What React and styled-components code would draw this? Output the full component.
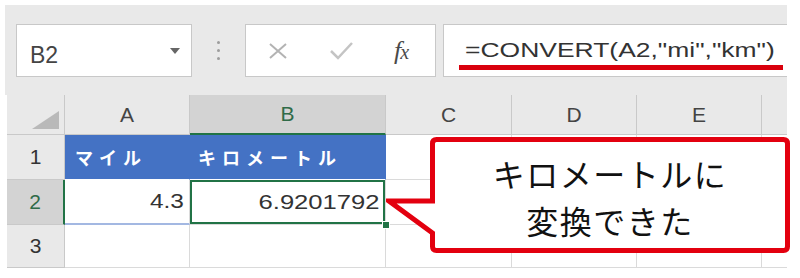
import styled, { createGlobalStyle } from "styled-components";

const GlobalStyle = createGlobalStyle`
  html, body {
    margin: 0;
    padding: 0;
    background: #ffffff;
  }
  body {
    font-family: "Liberation Sans", Arial, sans-serif;
  }
`;

const Page = styled.div`
  position: relative;
  width: 800px;
  height: 278px;
  overflow: hidden;
  background: #ffffff;
`;

const Sheet = styled.div`
  margin: 5px 13px 0 5px;
  width: 782px;
`;

const Toolbar = styled.div`
  display: flex;
  align-items: flex-start;
  height: 90px;
  padding: 19px 0 0 11px;
  box-sizing: border-box;
  background: #e9e9e9;
`;

const NameBox = styled.div`
  display: flex;
  align-items: center;
  justify-content: space-between;
  width: 176px;
  height: 53px;
  box-sizing: border-box;
  padding: 0 11px 0 13px;
  background: #ffffff;
  border: 1px solid #c8c8c8;
`;

const NameText = styled.span`
  padding-top: 10px;
  font-size: 23px;
  color: #444;
`;

const DotsSlot = styled.div`
  display: flex;
  flex-direction: column;
  align-items: center;
  justify-content: center;
  gap: 5px;
  width: 53px;
  height: 53px;
`;

const Dot = styled.span`
  width: 3px;
  height: 3px;
  border-radius: 50%;
  background: #9d9d9d;
`;

const ButtonBox = styled.div`
  display: flex;
  align-items: center;
  width: 191px;
  height: 53px;
  box-sizing: border-box;
  padding-left: 22px;
  background: #ffffff;
  border: 1px solid #c8c8c8;
`;

const IconSlot = styled.span`
  display: flex;
  align-items: center;
  justify-content: center;
  width: ${(p) => p.$w}px;
  margin-right: ${(p) => p.$gap}px;
`;

const Fx = styled.span`
  margin-left: 3px;
  font-family: "Liberation Serif", "Times New Roman", serif;
  font-style: italic;
  font-size: 26px;
  color: #4a4a4a;
  letter-spacing: -1px;

  small {
    font-size: 20px;
  }
`;

const FormulaBox = styled.div`
  flex: 1;
  height: 53px;
  box-sizing: border-box;
  margin-left: 7px;
  padding: 13px 0 0 15px;
  background: #ffffff;
  border: 1px solid #c8c8c8;
  border-right: none;
`;

const FormulaLine = styled.div`
  width: 318px;
  padding: 0 0 3px 6px;
  border-bottom: 5px solid #d9000d;
  font-size: 21px;
  line-height: 24px;
  color: #333;
  white-space: nowrap;
`;

const Stretch = styled.span`
  display: inline-block;
  transform: scaleX(${(p) => p.$sx});
  transform-origin: ${(p) => p.$origin};
`;

const Grid = styled.div`
  display: grid;
  grid-template-columns: 58px 125px 196px 126px 125px 125px 25px;
  grid-template-rows: 40px 45px 45px 43px;
  margin-left: 2px;
  width: 780px;
`;

const Cell = styled.div`
  position: relative;
  display: flex;
  align-items: center;
  box-sizing: border-box;
  background: #ffffff;
  border-right: ${(p) => (p.$last ? "none" : "1px solid #dadada")};
  border-bottom: 1px solid #dadada;
`;

const Corner = styled(Cell)`
  justify-content: flex-end;
  align-items: flex-end;
  padding: 0 5px 5px 0;
  background: #e9e9e9;
  border-right: 1px solid #c9c9c9;
  border-bottom: 1px solid #c9c9c9;
`;

const ColHead = styled(Cell)`
  justify-content: center;
  font-size: 21px;
  color: ${(p) => (p.$active ? "#2f6b48" : "#444")};
  background: ${(p) => (p.$active ? "#d3d3d3" : "#e9e9e9")};
  border-right: ${(p) => (p.$last ? "none" : "1px solid #c9c9c9")};
  border-bottom: ${(p) => (p.$active ? "2px solid #217346" : "1px solid #c9c9c9")};
`;

const RowHead = styled(Cell)`
  justify-content: center;
  font-size: 21px;
  color: ${(p) => (p.$active ? "#2f6b48" : "#333")};
  background: ${(p) => (p.$active ? "#d3d3d3" : "#e9e9e9")};
  border-right: ${(p) => (p.$active ? "2px solid #217346" : "1px solid #c9c9c9")};
  border-bottom: 1px solid #c9c9c9;
`;

const TitleCell = styled(Cell)`
  padding-left: ${(p) => p.$pad}px;
  background: #4472c4;
  border-right: 1px solid #4472c4;
  border-bottom: 1px solid #ffffff;
  font-family: "Noto Sans CJK JP", sans-serif;
  font-weight: 700;
  font-size: 18px;
  letter-spacing: 6px;
  color: #ffffff;
`;

const NumberCell = styled(Cell)`
  justify-content: flex-end;
  padding-right: 5px;
  font-size: 20px;
  color: #333;
  border-bottom: ${(p) => (p.$banded ? "2px solid #a3b8e2" : "1px solid #dadada")};
  box-shadow: ${(p) => (p.$selected ? "inset 0 0 0 2px #217346" : "none")};
  z-index: ${(p) => (p.$selected ? 2 : "auto")};

  &::after {
    content: "";
    display: ${(p) => (p.$selected ? "block" : "none")};
    position: absolute;
    right: -5px;
    bottom: -5px;
    width: 6px;
    height: 6px;
    background: #217346;
    border: 1px solid #ffffff;
  }
`;

const Callout = styled.div`
  position: absolute;
  left: 386px;
  top: 137px;
  width: 404px;
  height: 116px;
  z-index: 5;
`;

const CalloutText = styled.div`
  position: absolute;
  left: 51px;
  top: 7px;
  right: 8px;
  bottom: 8px;
  display: flex;
  flex-direction: column;
  align-items: center;
  padding: 6px 0 0 1px;
  box-sizing: border-box;
  font-family: "Noto Sans CJK JP", sans-serif;
  font-size: 32px;
  line-height: 47px;
  letter-spacing: 1.5px;
  color: #111;
`;

const columns = ["A", "B", "C", "D", "E", ""];

export default function App() {
  return (
    <Page>
      <GlobalStyle />
      <Sheet>
        <Toolbar>
          <NameBox>
            <NameText>B2</NameText>
            <svg width="10" height="6" viewBox="0 0 10 6">
              <path d="M0 0 H10 L5 6 Z" fill="#666" />
            </svg>
          </NameBox>
          <DotsSlot>
            <Dot />
            <Dot />
            <Dot />
          </DotsSlot>
          <ButtonBox>
            <IconSlot $w={20} $gap={42}>
              <svg width="20" height="16" viewBox="0 0 20 16">
                <path d="M2 1 L18 15 M18 1 L2 15" stroke="#b3b3b3" strokeWidth="2" fill="none" />
              </svg>
            </IconSlot>
            <IconSlot $w={23} $gap={38}>
              <svg width="23" height="18" viewBox="0 0 23 18">
                <path d="M1 9 L8 16 L22 1" stroke="#c4c4c4" strokeWidth="2.5" fill="none" />
              </svg>
            </IconSlot>
            <Fx>
              f<small>x</small>
            </Fx>
          </ButtonBox>
          <FormulaBox>
            <FormulaLine>
              <Stretch $sx={1.26} $origin="left">=CONVERT(A2,"mi","km")</Stretch>
            </FormulaLine>
          </FormulaBox>
        </Toolbar>

        <Grid>
          <Corner>
            <svg width="27" height="18" viewBox="0 0 27 18">
              <path d="M27 0 V18 H0 Z" fill="#b9b9b9" />
            </svg>
          </Corner>
          {columns.map((c, i) => (
            <ColHead key={c || "f"} $active={c === "B"} $last={i === columns.length - 1}>
              {c}
            </ColHead>
          ))}

          <RowHead>1</RowHead>
          <TitleCell $pad={10}>マイル</TitleCell>
          <TitleCell $pad={8}>キロメートル</TitleCell>
          <Cell />
          <Cell />
          <Cell />
          <Cell $last />

          <RowHead $active>2</RowHead>
          <NumberCell $banded>
            <Stretch $sx={1.22} $origin="right">4.3</Stretch>
          </NumberCell>
          <NumberCell $selected>
            <Stretch $sx={1.28} $origin="right">6.9201792</Stretch>
          </NumberCell>
          <Cell />
          <Cell />
          <Cell />
          <Cell $last />

          <RowHead>3</RowHead>
          <Cell />
          <Cell />
          <Cell />
          <Cell />
          <Cell />
          <Cell $last />
        </Grid>
      </Sheet>

      <Callout>
        <svg width="404" height="116" viewBox="0 0 404 116">
          <path
            d="M50.5 2.5 H397.5 Q401.5 2.5 401.5 6.5 V109.5 Q401.5 113.5 397.5 113.5 H50.5 Q46.5 113.5 46.5 109.5 V96 L3 64 H46.5 V6.5 Q46.5 2.5 50.5 2.5 Z"
            fill="#ffffff"
            stroke="#e3000f"
            strokeWidth="5"
            strokeLinejoin="miter"
          />
        </svg>
        <CalloutText>
          <span>キロメートルに</span>
          <span>変換できた</span>
        </CalloutText>
      </Callout>
    </Page>
  );
}
